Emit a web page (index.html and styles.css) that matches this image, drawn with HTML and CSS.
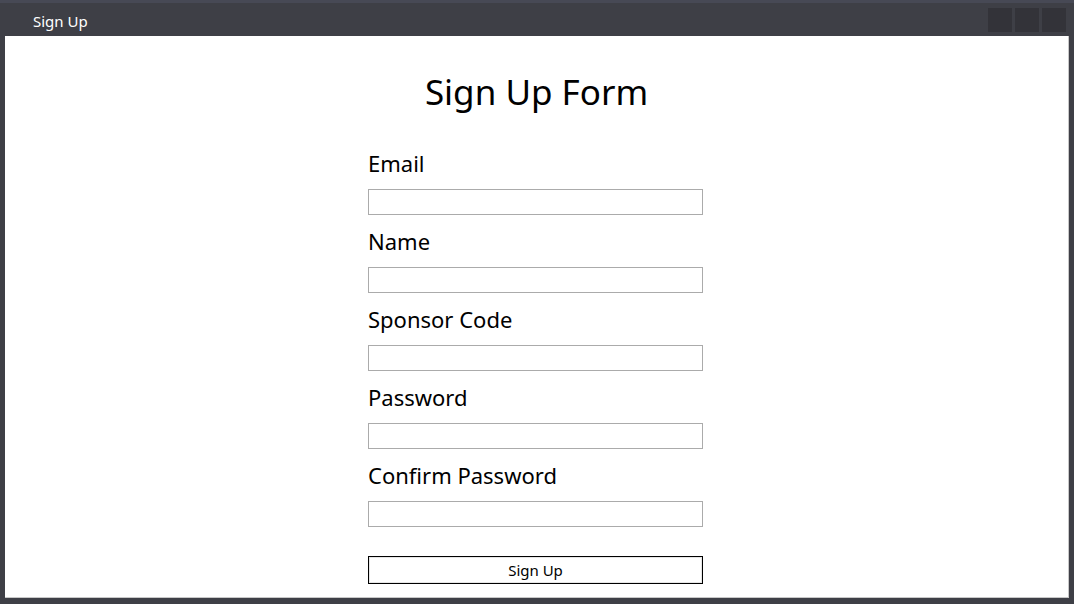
FILE: index.html
```html
<!DOCTYPE html>
<html>
<head>
<meta charset="utf-8">
<link rel="stylesheet" href="styles.css">
<title>Sign Up</title>
</head>
<body>
<div class="window">
  <div class="titlebar">
    <span class="title">Sign Up</span>
    <div class="controls">
      <div class="ctrl"></div>
      <div class="ctrl"></div>
      <div class="ctrl"></div>
    </div>
  </div>
  <div class="content">
    <h1 class="heading">Sign Up Form</h1>
    <form class="form">
      <label class="label">Email</label>
      <input class="field" type="text">
      <label class="label">Name</label>
      <input class="field" type="text">
      <label class="label">Sponsor Code</label>
      <input class="field" type="text">
      <label class="label">Password</label>
      <input class="field" type="password">
      <label class="label">Confirm Password</label>
      <input class="field" type="password">
      <button class="submit" type="button">Sign Up</button>
    </form>
  </div>
</div>
</body>
</html>
```
FILE: styles.css
```css
html, body {
  margin: 0;
  padding: 0;
  width: 1074px;
  height: 604px;
  overflow: hidden;
  background: #3e3f46;
  font-family: "Noto Sans", "Open Sans", sans-serif;
}
.window {
  display: flex;
  flex-direction: column;
  height: 604px;
  border-top: 3px solid #474955;
  box-sizing: border-box;
}
.titlebar {
  height: 33px;
  display: flex;
  align-items: center;
  justify-content: space-between;
  padding: 0 8px 0 33px;
  box-sizing: border-box;
}
.title {
  color: #ffffff;
  font-size: 15px;
  margin-top: 2px;
}
.controls {
  display: flex;
  gap: 3px;
  margin-top: 1px;
}
.ctrl {
  width: 24px;
  height: 24px;
  background: #333339;
}
.content {
  flex: 1;
  margin: 0 5px 6px 5px;
  background: #ffffff;
  border-right: 1px solid #c8c8c8;
  border-bottom: 1px solid #c8c8c8;
  display: flex;
  flex-direction: column;
  align-items: center;
}
.heading {
  margin: 32px 0 0 0;
  font-weight: 400;
  font-size: 35px;
  line-height: 48px;
  color: #000;
}
.form {
  width: 335px;
  display: flex;
  flex-direction: column;
  margin-top: 32px;
  margin-right: 2px;
}
.label {
  font-size: 22px;
  line-height: 30px;
  height: 30px;
  margin-top: 0;
  margin-bottom: 11px;
  color: #000;
}
.field {
  height: 26px;
  box-sizing: border-box;
  border: 1px solid #ababab;
  margin: 0 0 11px 0;
  padding: 0;
  background: #fff;
  outline: none;
}
.submit {
  margin-top: 18px;
  height: 28px;
  box-sizing: border-box;
  border: 1px solid #000;
  box-shadow: inset 0 0 0 1px #e6e6e6;
  background: #fff;
  font-family: inherit;
  font-size: 15px;
  color: #000;
  padding: 0;
}
```
